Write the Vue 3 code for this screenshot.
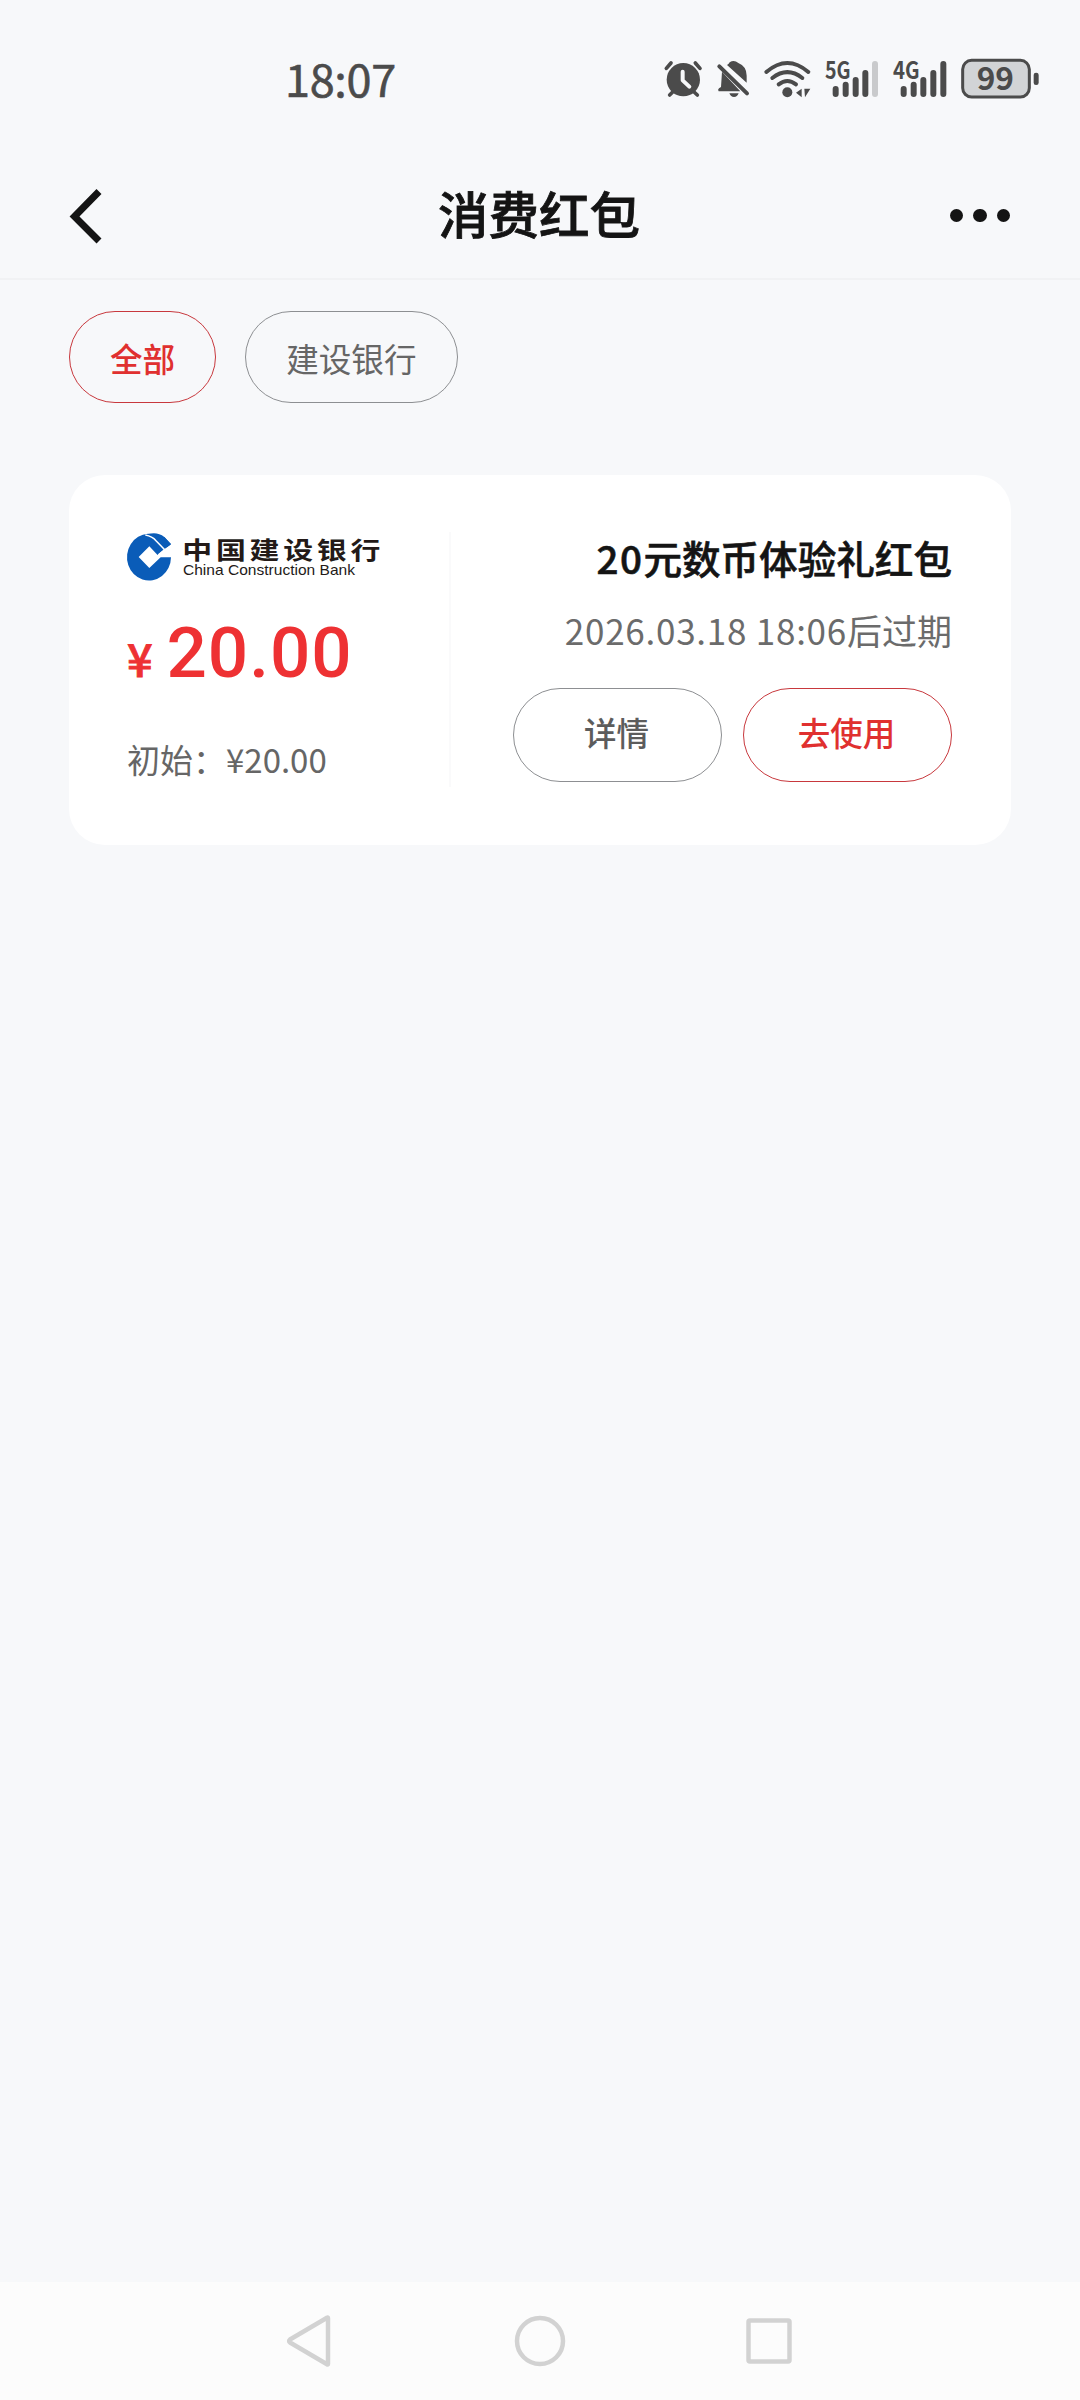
<script setup>
const filters = [
  { label: '全部', active: true },
  { label: '建设银行', active: false },
]
</script>

<template>
  <div class="screen">
    <header class="status">
      <span class="time">18:07</span>
      <div class="status-icons">
        <svg width="50" height="70" viewBox="40 0 150 210">
          <g stroke="#4b4b4b" stroke-width="11" stroke-linecap="round">
            <path d="M50 70 64 54M137 54 151 70M60 150 72 138M143 150 130 138" />
          </g>
          <circle cx="101" cy="104" r="50" fill="#4b4b4b" />
          <path d="M99 80V106L119 125" fill="none" stroke="#f7f8fa" stroke-width="12" stroke-linecap="round" stroke-linejoin="round" />
        </svg>
        <svg width="46" height="70" viewBox="190 0 138 210">
          <path d="M217 80 272 139H207Q203 134 208 130L214 126Z" fill="#4b4b4b" />
          <path d="M232 60Q238 57 240 52Q253 43 266 54Q291 64 291 92V113Z" fill="#4b4b4b" />
          <path d="M239 145H267Q263 156 253 156Q243 156 239 145Z" fill="#4b4b4b" />
          <path d="M209 64 292 145" stroke="#4b4b4b" stroke-width="12" stroke-linecap="round" />
        </svg>
        <svg width="64" height="70" viewBox="328 0 192 210">
          <g fill="none" stroke="#4b4b4b" stroke-width="12" stroke-linecap="round">
            <path d="M350 81Q413 27 476 81M368 99Q413 64 458 99M387 118Q413 98 439 118" />
          </g>
          <circle cx="413" cy="142" r="15" fill="#4b4b4b" />
          <path d="M456 131V157L439 143ZM464 131H482L466 157Z" fill="#4b4b4b" />
        </svg>
        <svg width="66" height="70" viewBox="520 0 198 210">
          <text class="net" x="526" y="101" textLength="77" lengthAdjust="spacingAndGlyphs">5G</text>
          <g stroke="#4b4b4b" stroke-width="18" stroke-linecap="round">
            <path d="M558 132V147M588 119V147M618 105V147M647 84V147" />
            <path d="M676 57V147" stroke="#c9cacc" />
          </g>
        </svg>
        <svg width="66" height="70" viewBox="718 0 198 210">
          <text class="net" x="730" y="101" textLength="80" lengthAdjust="spacingAndGlyphs">4G</text>
          <g stroke="#4b4b4b" stroke-width="18" stroke-linecap="round">
            <path d="M762 132V147M792 119V147M821 105V147M851 84V147M881 57V147" />
          </g>
        </svg>
        <svg width="88" height="70" viewBox="916 0 264 210">
          <rect x="939" y="46" width="200" height="110" rx="27" fill="#d2d4d6" stroke="#4b4b4b" stroke-width="9" />
          <rect x="1152" y="83" width="15" height="37" rx="7" fill="#4b4b4b" />
          <text class="level" x="981" y="136" textLength="112" lengthAdjust="spacingAndGlyphs">99</text>
        </svg>
      </div>
    </header>

    <nav class="titlebar">
      <svg class="back" width="34" height="56" viewBox="0 0 34 56">
        <path d="M31 3.5 6.500 28.5 31 53" fill="none" stroke="#141414" stroke-width="7" />
      </svg>
      <h1>消费红包</h1>
      <div class="more"><i></i><i></i><i></i></div>
    </nav>

    <div class="filters">
      <span v-for="f in filters" :key="f.label" class="chip" :class="{ active: f.active }">{{ f.label }}</span>
    </div>

    <section class="card">
      <div class="left">
        <svg class="logo" width="260" height="50" viewBox="200 204 780 150">
          <path d="M317 235A66 70 0 1 0 332 280H301L267 312 235 279 267 247 291 272Z" fill="#0a5cb8" />
          <path d="M262 211Q290 202 312 219L332 241 313 257 284 226Q275 216 262 211Z" fill="#0a5cb8" />
          <path d="M291 273 332 240 312 219 286 229Z" fill="#0a5cb8" />
          <path d="M255 213Q276 217 287 230L316 260" fill="none" stroke="#fff" stroke-width="4.500" />
          <path d="M293 271 311 256 337 240V279H301Z" fill="#fff" />
          <text class="logo-cn" transform="translate(366 285) scale(1.23 1)">中国建设银行</text>
          <text class="logo-en" x="368" y="332" textLength="516" lengthAdjust="spacingAndGlyphs">China Construction Bank</text>
        </svg>
        <p class="amount"><span class="yen">¥</span><span class="num">20.00</span></p>
        <p class="initial">初始：¥20.00</p>
      </div>
      <div class="divider"></div>
      <div class="right">
        <h2><span>20</span>元数币体验礼红包</h2>
        <p class="expiry"><span>2026.03.18 18:06</span>后过期</p>
        <div class="actions">
          <button type="button">详情</button>
          <button type="button" class="primary">去使用</button>
        </div>
      </div>
    </section>

    <footer class="sysnav">
      <svg width="56" height="56" viewBox="0 0 56 56"><path d="M45 5Q45 4 44 4.800L7 26.500Q5.500 28 7 29.500L44 51.200Q45 52 45 51Z" /></svg>
      <svg width="56" height="56" viewBox="0 0 56 56"><circle cx="28" cy="28" r="23" /></svg>
      <svg width="56" height="56" viewBox="0 0 56 56"><rect x="7.500" y="7.500" width="41" height="41" rx="1.500" /></svg>
    </footer>
  </div>
</template>

<style>
body { margin: 0; background: #f7f8fa; }
</style>

<style scoped>
* { box-sizing: border-box; }
.screen {
  width: 1080px;
  height: 2400px;
  display: flex;
  flex-direction: column;
  background: #f7f8fa;
  font-family: "Noto Sans CJK SC", sans-serif;
}
h1, h2, p { margin: 0; }
.status {
  height: 155px;
  padding: 45px 37px 0 285px;
  display: flex;
  justify-content: space-between;
  align-items: flex-start;
}
.time {
  font-size: 45px;
  line-height: 65px;
  letter-spacing: -.3px;
  color: #4b4b4b;
  -webkit-text-stroke: .6px #4b4b4b;
}
.status-icons { display: flex; }
.net { font: 700 72px "Noto Sans CJK SC", sans-serif; fill: #4b4b4b; }
.level { font: 700 94px "Noto Sans CJK SC", sans-serif; fill: #4b4b4b; }
.titlebar {
  height: 125px;
  padding: 0 70px 2px 68px;
  border-bottom: 2px solid #f1f2f4;
  display: grid;
  grid-template-columns: 1fr auto 1fr;
  align-items: center;
}
h1 { padding-bottom: 8px; font-size: 50.500px; line-height: 70px; font-weight: 500; color: #141414; -webkit-text-stroke: .8px #141414; }
.more { display: flex; gap: 10px; justify-content: flex-end; }
.more i { width: 13.400px; height: 13.400px; border-radius: 50%; background: #141414; }
.filters { display: flex; gap: 29px; padding: 31px 69px 0; }
.chip {
  height: 92px;
  padding: 0 40px;
  border: 1px solid #8d8f92;
  border-radius: 46px;
  font-size: 32.600px;
  line-height: 91px;
  color: #666;
}
.chip.active { border-color: #c8383d; color: #e0302f; font-weight: 500; }
.card {
  margin: 72px 69px 0;
  height: 370px;
  padding: 57px 59px 58px 58px;
  display: flex;
  border-radius: 36px;
  background: #fff;
}
.left { width: 322px; display: flex; flex-direction: column; }
.logo { display: block; overflow: visible; }
.logo-cn { font: 700 73px "Noto Sans CJK SC", sans-serif; letter-spacing: 9px; fill: #231a18; }
.logo-en { font: 43px "Liberation Sans", sans-serif; fill: #231a18; }
.amount { display: flex; align-items: baseline; height: 130px; color: #ee3133; line-height: 142px; }
.yen { font-size: 45px; font-weight: 500; width: 39.500px; -webkit-text-stroke: .8px #ee3133; }
.num { font: 500 71px/142px Roboto, sans-serif; letter-spacing: 1px; }
.initial { margin-top: 22px; font-size: 33px; line-height: 50px; color: #666; }
.divider { width: 2px; background: #fafafb; }
.right { flex: 1; display: flex; flex-direction: column; align-items: flex-end; }
h2 { margin-top: -2px; font-size: 38.600px; line-height: 54px; font-weight: 500; color: #141414; -webkit-text-stroke: .6px #141414; }
h2 span { letter-spacing: 1.500px; }
.expiry { margin-top: 21px; font-size: 35px; line-height: 50px; color: #6b6b6b; white-space: nowrap; }
.expiry span { letter-spacing: .75px; }
.actions { display: flex; gap: 21px; margin-top: 33px; }
button {
  width: 209px;
  height: 94px;
  padding: 0 2px 6px 0;
  border: 1px solid #8d8f92;
  border-radius: 47px;
  background: none;
  font: 500 32.500px/50px "Noto Sans CJK SC", sans-serif;
  color: #5c5c5c;
}
button.primary { border-color: #c8383d; color: #e0302f; }
.sysnav {
  margin-top: auto;
  height: 118px;
  padding: 0 283px;
  display: flex;
  justify-content: space-between;
  align-items: center;
  background: #fcfcfc;
}
.sysnav svg { fill: none; stroke: #d2d2d2; stroke-width: 4.500; stroke-linejoin: round; }
</style>
